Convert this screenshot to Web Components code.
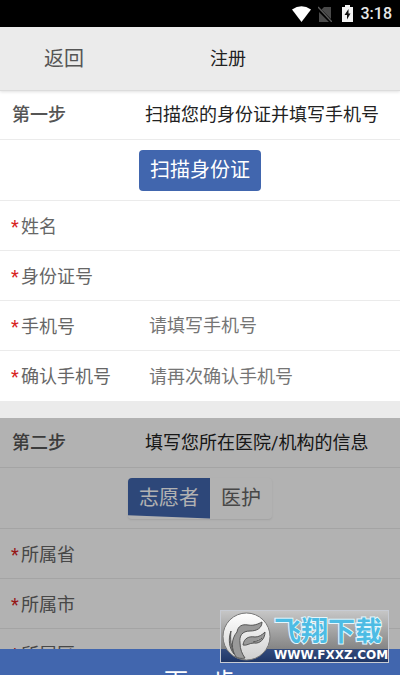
<!DOCTYPE html>
<html lang="zh-CN">
<head>
<meta charset="utf-8">
<meta name="viewport" content="width=device-width, initial-scale=1">
<title>注册</title>
<style>
    html, body {
        margin: 0;
        height: 100%;
    }

    body {
        font-family: Roboto, "Noto Sans CJK SC", sans-serif;
        font-size: 18px;
        line-height: 24px;
        color: #666;
        background: #ebebeb;
    }
</style>
</head>
<body>
<register-page></register-page>

<script>
class StatusBar extends HTMLElement {

    constructor() {
        super();
        this.shadowDOM = this.attachShadow({mode: "open"});
    }

    connectedCallback() {
        this.render();
    }

    render() {
        this.shadowDOM.innerHTML = `
        <style>
            :host {
                display: flex;
                flex: none;
                align-items: center;
                justify-content: flex-end;
                height: 27px;
                padding-right: 8px;
                background: #000;
                color: #e8e8e8;
                font-size: 16px;
                font-weight: 500;
            }

            .wifi { margin-right: 7px; }
            .sim { margin-right: 10px; }
            .battery { margin-right: 8px; }
        </style>
        <svg class="wifi" width="19" height="16" viewBox="0 0 19 16">
            <path d="M0 3.5Q9.5-3 19 3.5L9.5 16Z" fill="#fff"/>
        </svg>
        <svg class="sim" width="14" height="16" viewBox="0 0 14 16">
            <path d="M6 1H13V13L3.5 3.5ZM1 6L11 16H1Z" fill="#4a4a4a"/>
            <path d="M0 1L14 16" stroke="#5a5a5a" stroke-width="1.5"/>
        </svg>
        <svg class="battery" width="11" height="17" viewBox="0 0 11 17">
            <path d="M3 0H8V2H11V17H0V2H3Z" fill="#f4f4f4"/>
            <path d="M6.5 4L2.5 10H5V14.5L8.5 8.5H6.5Z" fill="#111"/>
        </svg>
        <time>3:18</time>
        `;
    }
}

customElements.define("status-bar", StatusBar);


class AppHeader extends HTMLElement {

    constructor() {
        super();
        this.shadowDOM = this.attachShadow({mode: "open"});
    }

    connectedCallback() {
        this.render();
    }

    render() {
        this.shadowDOM.innerHTML = `
        <style>
            * {
                margin: 0;
                padding: 0;
                box-sizing: border-box;
            }

            :host {
                display: flex;
                flex: none;
                align-items: center;
                height: 64px;
                box-sizing: border-box;
                background: #ebebeb;
                border-bottom: 1px solid #dcdcdc;
                box-shadow: 0 1px 3px rgba(0, 0, 0, 0.12);
                position: relative;
                z-index: 1;
            }

            button {
                flex: 0 0 32%;
                border: 0;
                background: none;
                font: inherit;
                font-size: 20px;
                color: #555;
            }

            h1 {
                flex: 0 0 50%;
                text-align: center;
                font-size: 18px;
                font-weight: normal;
                color: #222;
            }
        </style>
        <button type="button">返回</button>
        <h1><slot></slot></h1>
        `;
    }
}

customElements.define("app-header", AppHeader);


class StepSection extends HTMLElement {

    constructor() {
        super();
        this.shadowDOM = this.attachShadow({mode: "open"});
    }

    connectedCallback() {
        this.render();
    }

    render() {
        this.shadowDOM.innerHTML = `
        <style>
            * {
                margin: 0;
                padding: 0;
                box-sizing: border-box;
            }

            :host {
                display: block;
                position: relative;
                background: #fff;
                margin-bottom: 17px;
            }

            /* steps that are not reachable yet are covered by a grey mask */
            :host([locked])::after {
                content: "";
                position: absolute;
                inset: 0;
                background: rgba(0, 0, 0, 0.3);
            }

            header {
                display: flex;
                align-items: center;
                height: 50px;
                padding-left: 12px;
                border-bottom: 1px solid #ebebeb;
            }

            h2 {
                flex: 0 0 133px;
                font-size: 18px;
                font-weight: 500;
                color: #555;
            }

            p {
                color: #222;
                white-space: nowrap;
            }

            .action {
                display: flex;
                align-items: center;
                justify-content: center;
                height: 61px;
                border-bottom: 1px solid #ebebeb;
            }
        </style>
        <header>
            <h2>${this.getAttribute("step")}</h2>
            <p>${this.getAttribute("hint")}</p>
        </header>
        <div class="action"><slot name="action"></slot></div>
        <slot></slot>
        `;
    }
}

customElements.define("step-section", StepSection);


class ScanButton extends HTMLElement {

    constructor() {
        super();
        this.shadowDOM = this.attachShadow({mode: "open"});
    }

    connectedCallback() {
        this.render();
    }

    render() {
        this.shadowDOM.innerHTML = `
        <style>
            :host {
                display: block;
            }

            button {
                height: 41px;
                padding: 0 11px;
                border: 0;
                border-radius: 4px;
                background: #4166ae;
                color: #fff;
                font: inherit;
                font-size: 20px;
            }
        </style>
        <button type="button"><slot></slot></button>
        `;
    }
}

customElements.define("scan-button", ScanButton);


class RoleSwitch extends HTMLElement {

    constructor() {
        super();
        this.shadowDOM = this.attachShadow({mode: "open"});
    }

    connectedCallback() {
        this.render();
    }

    render() {
        const roles = this.getAttribute("roles").split(",");
        this.shadowDOM.innerHTML = `
        <style>
            :host {
                display: flex;
                border-radius: 4px;
                box-shadow: 0 1px 2px rgba(0, 0, 0, 0.1);
            }

            button {
                height: 41px;
                padding: 0 11px;
                border: 0;
                background: none;
                color: #666;
                font: inherit;
                font-size: 20px;
            }

            button[aria-pressed="true"] {
                background: #4166ae;
                color: #fff;
                border-radius: 4px 0 0 0;
                clip-path: polygon(0 0, 100% 0, 100% 100%, 0 92%);
            }
        </style>
        ${roles.map((role, i) => `<button type="button" aria-pressed="${i === 0}">${role}</button>`).join("")}
        `;
    }
}

customElements.define("role-switch", RoleSwitch);


class FormField extends HTMLElement {

    constructor() {
        super();
        this.shadowDOM = this.attachShadow({mode: "open"});
    }

    connectedCallback() {
        this.render();
    }

    render() {
        this.shadowDOM.innerHTML = `
        <style>
            * {
                margin: 0;
                padding: 0;
                box-sizing: border-box;
            }

            :host {
                display: flex;
                align-items: center;
                height: 50px;
                padding-left: 11px;
                box-sizing: border-box;
                border-bottom: 1px solid #ebebeb;
            }

            :host(:last-of-type) {
                border-bottom: 0;
            }

            label {
                display: flex;
                flex: 0 0 138px;
                padding-top: 2px;
                white-space: nowrap;
            }

            .star {
                flex: 0 0 10px;
                color: #d8231f;
            }

            input {
                flex: 1;
                min-width: 0;
                height: 40px;
                border: 0;
                outline: 0;
                background: none;
                font: inherit;
                color: #333;
            }

            input::placeholder {
                color: #757575;
            }
        </style>
        <label for="field"><span class="star">*</span>${this.getAttribute("label")}</label>
        <input id="field" type="${this.getAttribute("type") || "text"}" placeholder="${this.getAttribute("placeholder") || ""}">
        `;
    }
}

customElements.define("form-field", FormField);


class NextBar extends HTMLElement {

    constructor() {
        super();
        this.shadowDOM = this.attachShadow({mode: "open"});
    }

    connectedCallback() {
        this.render();
    }

    render() {
        this.shadowDOM.innerHTML = `
        <style>
            :host {
                display: block;
                flex: none;
                height: 26px;
                overflow: hidden;
                background: #4166ae;
            }

            button {
                display: block;
                width: 100%;
                height: 66px;
                border: 0;
                background: none;
                color: #fff;
                font: inherit;
                font-size: 24px;
            }
        </style>
        <button type="button"><slot></slot></button>
        `;
    }
}

customElements.define("next-bar", NextBar);


class SiteBadge extends HTMLElement {

    constructor() {
        super();
        this.shadowDOM = this.attachShadow({mode: "open"});
    }

    connectedCallback() {
        this.render();
    }

    render() {
        this.shadowDOM.innerHTML = `
        <style>
            :host {
                display: flex;
                align-items: center;
                gap: 3px;
                position: absolute;
                right: 11px;
                bottom: 12px;
                z-index: 2;
                box-sizing: border-box;
                width: 169px;
                height: 53px;
                padding-left: 1px;
                border: 1px solid #c8ccd4;
                background: linear-gradient(#c6c6c6, #858585 74%, #334b7c 75%, #1f3666);
            }

            svg {
                flex: none;
            }

            .text {
                display: flex;
                flex-direction: column;
                padding-top: 4px;
                white-space: nowrap;
            }

            .name {
                font-size: 27px;
                line-height: 32px;
                font-weight: 700;
                color: #4dbce4;
                -webkit-text-stroke: 2px #e4f7fd;
                paint-order: stroke fill;
            }

            .url {
                font-family: "DejaVu Sans", sans-serif;
                font-size: 12px;
                line-height: 14px;
                font-weight: bold;
                color: #fff;
            }
        </style>
        <svg width="49" height="49" viewBox="0 0 49 49">
            <defs>
                <linearGradient id="disc" x2="0" y2="1">
                    <stop offset="0" stop-color="#fff"/>
                    <stop offset="1" stop-color="#cfcfcf"/>
                </linearGradient>
            </defs>
            <circle cx="24.5" cy="24.5" r="23.5" fill="url(#disc)" stroke="#777"/>
            <path d="M14 45C9 37 9 27 15 20C16 14 20 12 26 13C32 14 36 12 40 10C40 16 35 19 28 19C20 19 17 24 18 31C18 37 20 42 23 46C19 47 16 46 14 45Z" fill="#999" stroke="#555"/>
            <path d="M21 33C22 26 27 24 33 25C37 25 40 23 43 20C43 27 38 32 32 31C27 31 25 34 21 33ZM31 30C35 29 38 28 40 26" fill="#999" stroke="#555"/>
            <path d="M12 42C7 36 6 27 9 19C8 27 9 34 12 42Z" fill="#888" stroke="#555"/>
        </svg>
        <div class="text">
            <span class="name">飞翔下载</span>
            <span class="url">WWW.FXXZ.COM</span>
        </div>
        `;
    }
}

customElements.define("site-badge", SiteBadge);


class RegisterPage extends HTMLElement {

    constructor() {
        super();
        this.shadowDOM = this.attachShadow({mode: "open"});
    }

    connectedCallback() {
        this.render();
    }

    render() {
        this.shadowDOM.innerHTML = `
        <style>
            :host {
                display: flex;
                flex-direction: column;
                height: 100vh;
                position: relative;
                overflow: hidden;
            }

            main {
                flex: 1;
                min-height: 0;
                overflow: hidden;
                margin-top: -1px;
            }
        </style>
        <status-bar></status-bar>
        <app-header>注册</app-header>
        <main>
            <step-section step="第一步" hint="扫描您的身份证并填写手机号">
                <scan-button slot="action">扫描身份证</scan-button>
                <form-field label="姓名"></form-field>
                <form-field label="身份证号"></form-field>
                <form-field label="手机号" type="tel" placeholder="请填写手机号"></form-field>
                <form-field label="确认手机号" type="tel" placeholder="请再次确认手机号"></form-field>
            </step-section>
            <step-section step="第二步" hint="填写您所在医院/机构的信息" locked>
                <role-switch slot="action" roles="志愿者,医护"></role-switch>
                <form-field label="所属省"></form-field>
                <form-field label="所属市"></form-field>
                <form-field label="所属区"></form-field>
            </step-section>
        </main>
        <next-bar>下一步</next-bar>
        <site-badge></site-badge>
        `;
    }
}

customElements.define("register-page", RegisterPage);
</script>
</body>
</html>
